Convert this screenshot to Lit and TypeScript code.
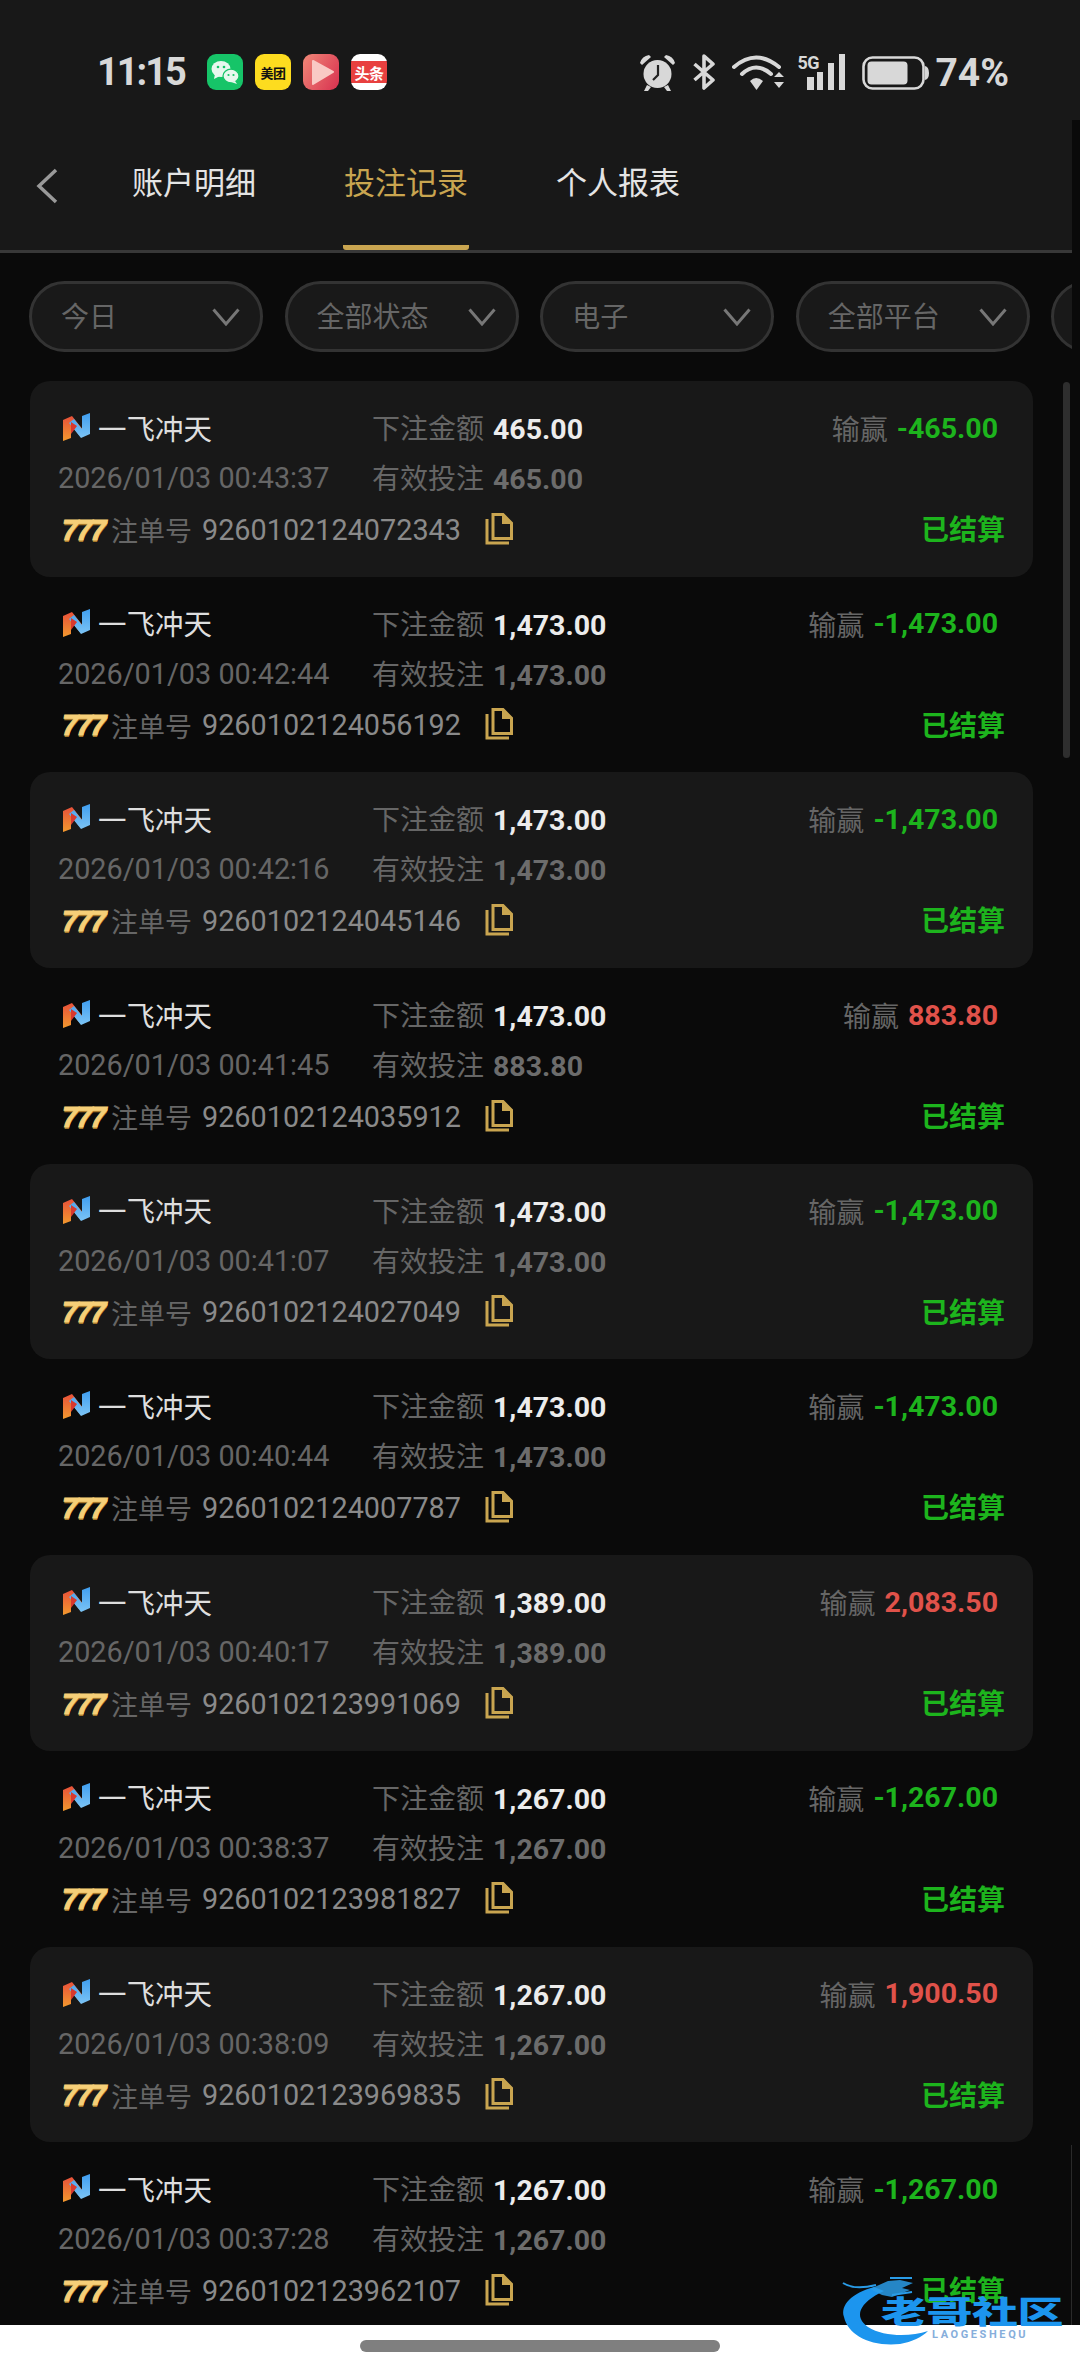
import { LitElement, html, css } from "lit";
import { customElement } from "lit/decorators.js";

interface Row { time: string; id: string; bet: string; valid: string; win: string; up?: boolean; }

const ROWS: Row[] = [
  { time: "00:43:37", id: "9260102124072343", bet: "465.00", valid: "465.00", win: "-465.00" },
  { time: "00:42:44", id: "9260102124056192", bet: "1,473.00", valid: "1,473.00", win: "-1,473.00" },
  { time: "00:42:16", id: "9260102124045146", bet: "1,473.00", valid: "1,473.00", win: "-1,473.00" },
  { time: "00:41:45", id: "9260102124035912", bet: "1,473.00", valid: "883.80", win: "883.80", up: true },
  { time: "00:41:07", id: "9260102124027049", bet: "1,473.00", valid: "1,473.00", win: "-1,473.00" },
  { time: "00:40:44", id: "9260102124007787", bet: "1,473.00", valid: "1,473.00", win: "-1,473.00" },
  { time: "00:40:17", id: "9260102123991069", bet: "1,389.00", valid: "1,389.00", win: "2,083.50", up: true },
  { time: "00:38:37", id: "9260102123981827", bet: "1,267.00", valid: "1,267.00", win: "-1,267.00" },
  { time: "00:38:09", id: "9260102123969835", bet: "1,267.00", valid: "1,267.00", win: "1,900.50", up: true },
  { time: "00:37:28", id: "9260102123962107", bet: "1,267.00", valid: "1,267.00", win: "-1,267.00" },
];

const CHIPS = ["今日", "全部状态", "电子", "全部平台", ""];

const chevron = html`<svg class="chev" viewBox="0 0 28 18" width="28" height="18"><path d="M1.5 1.5 L14 16 L26.5 1.5" fill="none" stroke="#777" stroke-width="3"/></svg>`;

const logo = html`<svg class="logo" viewBox="0 0 27 28" width="27" height="28">
  <defs>
    <linearGradient id="lo" x1="0" y1="0" x2="0" y2="1"><stop offset="0" stop-color="#e8503a"/><stop offset="1" stop-color="#f2992e"/></linearGradient>
    <linearGradient id="lb" x1="0" y1="0" x2="0" y2="1"><stop offset="0" stop-color="#3f9ef0"/><stop offset="1" stop-color="#7cc4f5"/></linearGradient>
  </defs>
  <path d="M0 7 L9 3 L21 18 L16 22 L8 12 V25 L0 28 Z" fill="url(#lo)"/>
  <path d="M27 21 L18 25 L6 10 L11 6 L19 16 V3 L27 0 Z" fill="url(#lb)"/>
  <path d="M8 9 L14 13 L8 21 Z" fill="#d8392f"/>
</svg>`;

const copyIcon = html`<svg class="copy" viewBox="0 0 28 32" width="28" height="32">
  <path d="M2 6 V30 H24" fill="none" stroke="#c9a550" stroke-width="3"/>
  <path d="M8 1.5 H18 L26.5 10 V25.5 H8 Z" fill="none" stroke="#c9a550" stroke-width="3"/>
  <path d="M17 1.5 L26.5 11 H17 Z" fill="#c9a550"/>
</svg>`;

@customElement("app-root")
export class AppRoot extends LitElement {
  static styles = css`
    :host { display: block; width: 1080px; height: 2373px; }
    * { box-sizing: border-box; }
    .page {
      position: relative; width: 1080px; height: 2373px; overflow: hidden;
      display: flex; flex-direction: column; background: #0a0a0a;
      font-family: Roboto, "Noto Sans CJK SC", sans-serif;
    }
    .status {
      flex: none; height: 120px; background: #181818; display: flex; align-items: flex-start;
      padding: 54px 71px 0 97px; color: #d8d8d8;
    }
    .time { font-size: 38px; font-weight: 700; line-height: 36px; width: 110px; letter-spacing: -2px; }
    .apps { display: flex; gap: 12px; }
    .app { width: 36px; height: 36px; border-radius: 9px; overflow: hidden; display: flex; align-items: center; justify-content: center; }
    .wechat { background: #16c468; }
    .mt { background: #fddc1f; color: #111; font-size: 13px; font-weight: 700; letter-spacing: -0.5px; white-space: nowrap; }
    .play { background: linear-gradient(120deg, #f08878, #d8304f); }
    .tt { background: linear-gradient(#fff 0 7px, #e8403f 7px 29px, #fff 29px); color: #fff; font-size: 15px; font-weight: 700; white-space: nowrap; letter-spacing: -0.5px; }
    .right { margin-left: auto; display: flex; align-items: flex-start; }
    .right svg { display: block; flex: none; }
    .alarm { margin-right: 16px; }
    .bt { margin-right: 16px; }
    .wifi { margin-right: 13px; }
    .sig { position: relative; flex: none; width: 48px; height: 36px; margin-right: 17px; }
    .sig span { position: absolute; left: 0; top: 0; font-size: 18px; line-height: 17px; font-weight: 700; letter-spacing: -0.5px; }
    .batt { margin-right: 6px; margin-top: 2px; }
    .pct { font-size: 39px; font-weight: 700; line-height: 38px; white-space: nowrap; }

    .tabs {
      flex: none; width: 1072px; height: 133px; background: #181818; border-bottom: 3px solid #383838;
      display: flex; align-items: stretch; padding-left: 36px;
    }
    .back { width: 95px; padding-top: 48px; flex: none; }
    .back svg { display: block; }
    .tab {
      width: 126px; margin-right: 86px; font-size: 31px; line-height: 40px; color: #e4e4e4; padding-top: 44px;
      white-space: nowrap; text-align: center; border-bottom: 5px solid transparent;
    }
    .tab.on { color: #c9a550; border-bottom-color: #c9a550; border-radius: 0 0 3px 3px; }

    .chips { flex: none; width: 1072px; height: 128px; padding: 28px 0 0 29px; display: flex; gap: 21.6px; overflow: hidden; }
    .chip {
      flex: none; width: 234px; height: 71px; border: 3px solid #333; border-radius: 36px; background: #191919;
      color: #666; font-size: 28px; display: flex; align-items: center; justify-content: space-between; padding: 0 20px 0 29px;
    }
    .chip span { padding-bottom: 3px; }
    .chev { flex: none; }

    .list { flex: 1; min-height: 0; overflow: hidden; padding-left: 30px; }
    .card {
      width: 1003px; height: 195.7px; border-radius: 20px; padding: 21px 0 0 28px;
      display: grid; grid-template-columns: 314px 1fr auto; grid-auto-rows: 50px; align-items: center;
      font-size: 28.8px; color: #666; white-space: nowrap;
    }
    .card.alt { background: #181818; }
    .name { display: flex; align-items: center; color: #dedede; font-size: 28.5px; padding-left: 5px; }
    .logo { margin-right: 8px; flex: none; }
    .lab { font-size: 28px; }
    .val { font-weight: 700; margin-left: 9px; font-size: 28.5px; }
    .bet { color: #ececec; }
    .valid { color: #6c6c6c; }
    .win { justify-self: end; margin: 2px 35px 0 0; display: flex; align-items: center; }
    .win .val { color: #1db41d; }
    .win .val.up { color: #e0524a; }
    .date { margin-top: 2px; }
    .idrow { grid-column: 1 / 3; display: flex; align-items: center; padding-left: 4px; margin-top: 5px; }
    .sevens {
      width: 42px; margin-right: 7px; flex: none; font-family: "Liberation Sans", sans-serif; font-style: italic; font-weight: 700;
      font-size: 29px; line-height: 30px; letter-spacing: -2px;
      color: #f6cf78; -webkit-text-stroke: 1px #f6cf78; text-shadow: 0 2px 0 #a5772a;
    }
    .idlab { font-size: 27px; color: #666; }
    .idnum { color: #8a8a8a; margin-left: 10px; }
    .copy { margin-left: 24px; flex: none; margin-top: -2px; }
    .state { justify-self: end; margin-right: 28px; color: #1db41d; font-weight: 700; font-size: 28px; margin-top: 2px; }

    .home { flex: none; height: 48px; background: #fff; position: relative; z-index: 1; display: flex; justify-content: center; padding-top: 15px; }
    .home i { display: block; width: 360px; height: 12px; border-radius: 6px; background: #7f7f7f; }

    .scroll { position: absolute; left: 1063px; top: 382px; width: 7px; height: 376px; border-radius: 4px; background: #2e2e2e; }
    .scroll2 { position: absolute; left: 1071px; top: 2145px; width: 1px; height: 180px; background: #2a2a2a; }

    .mark { position: absolute; z-index: 2; left: 840px; top: 2275px; width: 230px; height: 75px; }
    .mark svg { position: absolute; left: 0; top: 0; }
    .mark b {
      position: absolute; left: 41px; top: 14px; font-size: 46px; line-height: 46px; font-weight: 900; color: #1c95ee;
      white-space: nowrap; transform: scaleY(0.66); transform-origin: 0 50%; letter-spacing: -0.5px;
    }
    .mark span { position: absolute; left: 92px; top: 54px; font-size: 11px; line-height: 12px; letter-spacing: 2.6px; color: #86aedb; font-weight: 700; white-space: nowrap; }
  `;

  private statusIcons() {
    const c = "#d8d8d8";
    return html`
      <svg class="alarm" viewBox="0 0 37 38" width="37" height="38">
        <circle cx="18.5" cy="20" r="14" fill="${c}"/>
        <path d="M1 9 Q3 2 10 1 L12 3 L3 11 Z M36 9 Q34 2 27 1 L25 3 L34 11 Z" fill="${c}"/>
        <path d="M8 31 L5 37 H9 L12 33 Z M29 31 L32 37 H28 L25 33 Z" fill="${c}"/>
        <path d="M19 11 V21 L14 26" fill="none" stroke="#222" stroke-width="2.2"/>
      </svg>
      <svg class="bt" viewBox="0 0 24 36" width="24" height="36">
        <path d="M2.5 10 L21 26 L12 34 V2 L21 10 L2.5 26" fill="none" stroke="${c}" stroke-width="3.6" stroke-linejoin="round"/>
      </svg>
      <svg class="wifi" viewBox="0 0 52 36" width="52" height="36">
        <path d="M2 13 Q24 -6 47 13" fill="none" stroke="${c}" stroke-width="4" stroke-linecap="round"/>
        <path d="M10 20 Q24 7 39 20" fill="none" stroke="${c}" stroke-width="4" stroke-linecap="round"/>
        <path d="M18 27 Q24 21 31 27 L24.5 36 Z" fill="${c}"/>
        <path d="M42 23 L47 18 L52 23 Z M42 28 L52 28 L47 34 Z" fill="${c}"/>
      </svg>
      <div class="sig">
        <span>5G</span>
        <svg viewBox="0 0 48 36" width="48" height="36">
          <rect x="10" y="23" width="7" height="13" fill="${c}"/>
          <rect x="20" y="18" width="6" height="18" fill="${c}"/>
          <rect x="31" y="9" width="6" height="27" fill="${c}"/>
          <rect x="42" y="0" width="6" height="36" fill="${c}"/>
        </svg>
      </div>
      <svg class="batt" viewBox="0 0 67 34" width="67" height="34">
        <rect x="1.5" y="1.5" width="60" height="31" rx="9" fill="none" stroke="${c}" stroke-width="2.6"/>
        <rect x="5.5" y="5.5" width="40" height="23" rx="4" fill="${c}"/>
        <path d="M63 10 Q67 11 67 17 Q67 23 63 24 Z" fill="${c}"/>
      </svg>`;
  }

  private watermark() {
    return html`<div class="mark">
      <svg viewBox="0 0 230 75" width="230" height="75">
        <path d="M34 12 C12 18 0 30 4 42 C8 60 30 72 60 69 C72 67 82 62 88 56 C70 62 44 62 28 52 C14 42 18 28 44 16 Z" fill="#1c95ee"/>
        <path d="M30 14 L48 6 L60 5 L73 8 L62 13 L70 15 L52 22 L42 20 Z" fill="#2a9ce8" opacity="0.85"/>
        <path d="M3 8 C12 14 24 13 36 10 M50 3 L72 3 M52 20 L72 17" fill="none" stroke="#2a9ce8" stroke-width="2"/>
      </svg>
      <b>老哥社区</b>
      <span>LAOGESHEQU</span>
    </div>`;
  }

  private card(r: Row, i: number) {
    return html`<div class="card ${i % 2 === 0 ? "alt" : ""}">
      <div class="name">${logo}一飞冲天</div>
      <div><span class="lab">下注金额</span><span class="val bet">${r.bet}</span></div>
      <div class="win"><span class="lab">输赢</span><span class="val ${r.up ? "up" : ""}">${r.win}</span></div>
      <div class="date">2026/01/03 ${r.time}</div>
      <div><span class="lab">有效投注</span><span class="val valid">${r.valid}</span></div>
      <div></div>
      <div class="idrow">
        <span class="sevens">777</span>
        <span class="idlab">注单号</span><span class="idnum">${r.id}</span>${copyIcon}
      </div>
      <div class="state">已结算</div>
    </div>`;
  }

  render() {
    return html`<div class="page">
      <div class="status">
        <div class="time">11:15</div>
        <div class="apps">
          <div class="app wechat">
            <svg viewBox="0 0 36 36" width="36" height="36">
              <ellipse cx="14" cy="15" rx="9.5" ry="8" fill="#e8f8ee"/>
              <path d="M8 20 L7 25 L13 22 Z" fill="#e8f8ee"/>
              <ellipse cx="24" cy="22" rx="8" ry="6.8" fill="#e8f8ee" stroke="#16c468" stroke-width="1.2"/>
              <path d="M28 27 L30 30 L24 28 Z" fill="#e8f8ee"/>
              <circle cx="11" cy="13" r="1.3" fill="#16c468"/><circle cx="17" cy="13" r="1.3" fill="#16c468"/>
              <circle cx="21.5" cy="21" r="1.1" fill="#16c468"/><circle cx="26.5" cy="21" r="1.1" fill="#16c468"/>
            </svg>
          </div>
          <div class="app mt">美团</div>
          <div class="app play">
            <svg viewBox="0 0 36 36" width="36" height="36"><path d="M10 7 L30 18 L10 30 Z" fill="#f9c9c4" stroke="#f9c9c4" stroke-width="2" stroke-linejoin="round"/></svg>
          </div>
          <div class="app tt">头条</div>
        </div>
        <div class="right">${this.statusIcons()}<span class="pct">74%</span></div>
      </div>
      <div class="tabs">
        <div class="back">
          <svg viewBox="0 0 22 36" width="22" height="36"><path d="M20 2 L3 18 L20 34" fill="none" stroke="#999" stroke-width="3.5"/></svg>
        </div>
        <div class="tab">账户明细</div>
        <div class="tab on">投注记录</div>
        <div class="tab">个人报表</div>
      </div>
      <div class="chips">
        ${CHIPS.map((c) => html`<div class="chip"><span>${c}</span>${chevron}</div>`)}
      </div>
      <div class="list">${ROWS.map((r, i) => this.card(r, i))}</div>
      <div class="home"><i></i></div>
      <div class="scroll"></div>
      <div class="scroll2"></div>
      ${this.watermark()}
    </div>`;
  }
}
